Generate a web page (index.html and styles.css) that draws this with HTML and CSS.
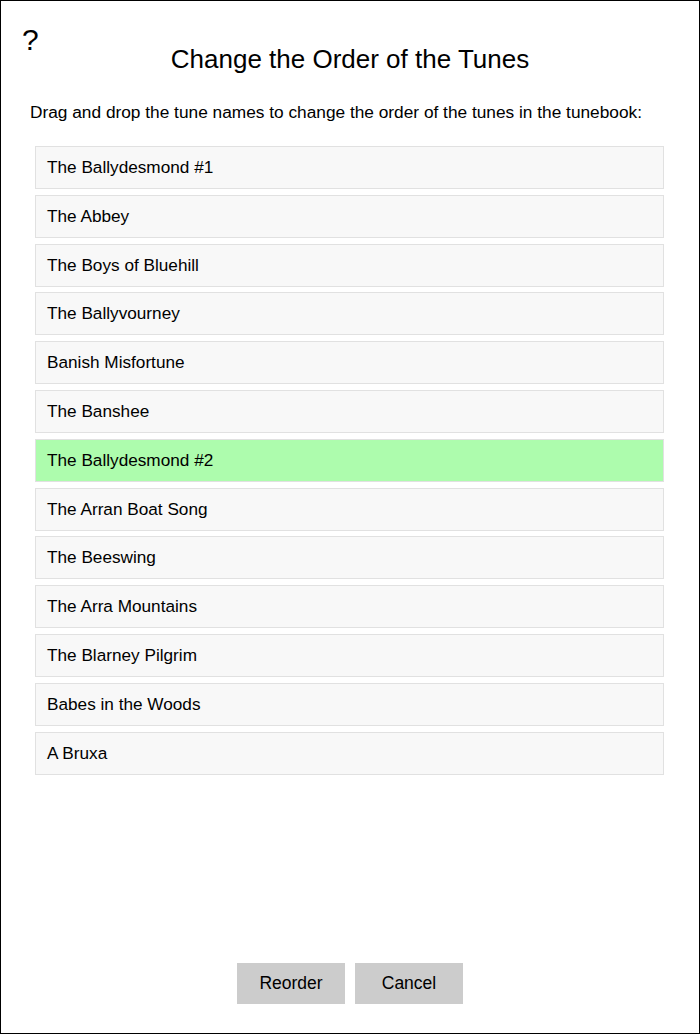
FILE: index.html
```html
<!DOCTYPE html>
<html>
    <head>
        <title>Change the Order of the Tunes</title>
        <link rel="stylesheet" href="styles.css">
    </head>
    <body>
        <div class="dialog">
            <div class="header">
                <a class="help" href="#" title="Help">?</a>
                <h1 class="title">Change the Order of the Tunes</h1>
            </div>
            <p class="hint">Drag and drop the tune names to change the order of the tunes in the tunebook:</p>
            <ul id="tunelist" class="tunelist">
                <li class="tune">The Ballydesmond #1</li>
                <li class="tune">The Abbey</li>
                <li class="tune">The Boys of Bluehill</li>
                <li class="tune">The Ballyvourney</li>
                <li class="tune">Banish Misfortune</li>
                <li class="tune">The Banshee</li>
                <li class="tune selected">The Ballydesmond #2</li>
                <li class="tune">The Arran Boat Song</li>
                <li class="tune">The Beeswing</li>
                <li class="tune">The Arra Mountains</li>
                <li class="tune">The Blarney Pilgrim</li>
                <li class="tune">Babes in the Woods</li>
                <li class="tune">A Bruxa</li>
            </ul>
            <div class="buttons">
                <button class="btn" id="reorderButton">Reorder</button>
                <button class="btn" id="cancelButton">Cancel</button>
            </div>
        </div>
    </body>
</html>
```

FILE: styles.css
```css
html, body {
    margin: 0;
    height: 100%;
    background: #fff;
    font-family: "Liberation Sans", Arial, sans-serif;
    color: #000;
}

.dialog {
    box-sizing: border-box;
    height: 1034px;
    border: 1px solid #000;
    display: flex;
    flex-direction: column;
}

.header {
    position: relative;
    padding-top: 43px;
}

.help {
    position: absolute;
    top: 22px;
    left: 21px;
    font-size: 30px;
    line-height: 34px;
    color: #000;
    text-decoration: none;
}

.title {
    margin: 0;
    text-align: center;
    font-size: 26px;
    font-weight: normal;
    line-height: 30px;
}

.hint {
    margin: 28px 0 0 29px;
    font-size: 17.3px;
    line-height: 20px;
}

.tunelist {
    list-style: none;
    margin: 24px 0 0 34px;
    padding: 0;
    width: 629px;
    display: flex;
    flex-direction: column;
    gap: 5.8px;
}

.tune {
    box-sizing: border-box;
    height: 43px;
    padding: 0 11px;
    display: flex;
    align-items: center;
    background: #f8f8f8;
    border: 1px solid #e1e1e1;
    font-size: 17.2px;
    cursor: move;
}

.tune.selected {
    background: #adfcad;
}

.buttons {
    margin-top: auto;
    margin-bottom: 29px;
    display: flex;
    justify-content: center;
    gap: 10px;
}

.btn {
    width: 108px;
    height: 41px;
    border: none;
    background: #cccccc;
    font-family: "Liberation Sans", Arial, sans-serif;
    font-size: 17.5px;
    color: #000;
}
```
